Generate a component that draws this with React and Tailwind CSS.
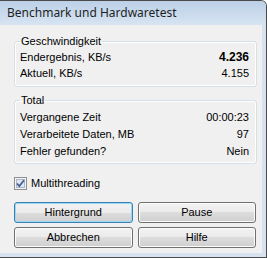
import React, { useState } from 'react'

const FONT = { fontFamily: '"Liberation Sans", Arial, sans-serif' }

function WinButton({ label, primary }) {
  return (
    <button
      className={`h-[21px] flex-1 rounded-[3px] border text-[11px] text-black bg-[linear-gradient(#f2f2f2,#ebebeb_50%,#dddddd_50%,#cfcfcf)] ${
        primary
          ? 'border-[#3c7fb1] shadow-[inset_0_0_0_1px_#97d9f7]'
          : 'border-[#707070] shadow-[inset_0_0_0_1px_#fcfcfc]'
      }`}
    >
      {label}
    </button>
  )
}

function Row({ label, value, bold }) {
  return (
    <div className="flex items-center justify-between h-[16px]">
      <span>{label}</span>
      <span className={bold ? 'font-bold text-[12px]' : ''}>{value}</span>
    </div>
  )
}

export default function App() {
  const [multi, setMulti] = useState(true)

  return (
    <div
      className="w-[267px] h-[258px] flex flex-col border-t border-r border-b border-[#4a4a4a] rounded-tr-[6px] bg-[#d6e2f0] overflow-hidden"
      style={FONT}
    >
      {/* Title bar */}
      <div className="h-[24px] shrink-0 flex items-center pl-[7px] bg-[linear-gradient(#bcd0e7,#d7e4f2)]">
        <span className="text-[12px] text-[#1f1f1f]" style={{ fontFamily: '"Noto Sans", "Open Sans", sans-serif' }}>
          Benchmark und Hardwaretest
        </span>
      </div>

      {/* Client area */}
      <div className="flex-1 mr-[4px] mb-[4px] bg-[#f0f0f0] pl-[14px] pr-[5px] pt-[10px] text-[11px] text-black">
        <fieldset className="border border-[#d5dfe5] rounded-[3px] px-[5px] pr-[7px] pb-[5px] shadow-[inset_0_0_0_1px_#ffffff]">
          <legend className="px-[1px] leading-[13px]">Geschwindigkeit</legend>
          <div className="pt-[1px]">
            <Row label="Endergebnis, KB/s" value="4.236" bold />
            <Row label="Aktuell, KB/s" value="4.155" />
          </div>
        </fieldset>

        <fieldset className="mt-[7px] border border-[#d5dfe5] rounded-[3px] px-[5px] pr-[7px] pb-[3px] shadow-[inset_0_0_0_1px_#ffffff]">
          <legend className="px-[1px] leading-[13px]">Total</legend>
          <div className="pt-[2px] [&>div]:h-[17px]">
            <Row label="Vergangene Zeit" value="00:00:23" />
            <Row label="Verarbeitete Daten, MB" value="97" />
            <Row label="Fehler gefunden?" value="Nein" />
          </div>
        </fieldset>

        <label className="mt-[11px] flex items-center gap-[3px] h-[17px] cursor-default" onClick={() => setMulti(!multi)}>
          <svg width="13" height="13" viewBox="0 0 13 13">
            <rect x="0.5" y="0.5" width="12" height="12" fill="#f4f4f4" stroke="#8e8f8f" />
            <rect x="2.5" y="2.5" width="8" height="8" fill="#dfe7f1" stroke="#a9b7c9" />
            {multi && (
              <path d="M3 6.5 L5.3 9 L10 3.2" fill="none" stroke="#4b5e93" strokeWidth="1.8" />
            )}
          </svg>
          <span className="ml-[1px]">Multithreading</span>
        </label>

        <div className="mt-[10px] pr-[1px] flex flex-col gap-[4px]">
          <div className="flex gap-[5px]">
            <WinButton label="Hintergrund" primary />
            <WinButton label="Pause" />
          </div>
          <div className="flex gap-[5px]">
            <WinButton label="Abbrechen" />
            <WinButton label="Hilfe" />
          </div>
        </div>
      </div>
    </div>
  )
}
